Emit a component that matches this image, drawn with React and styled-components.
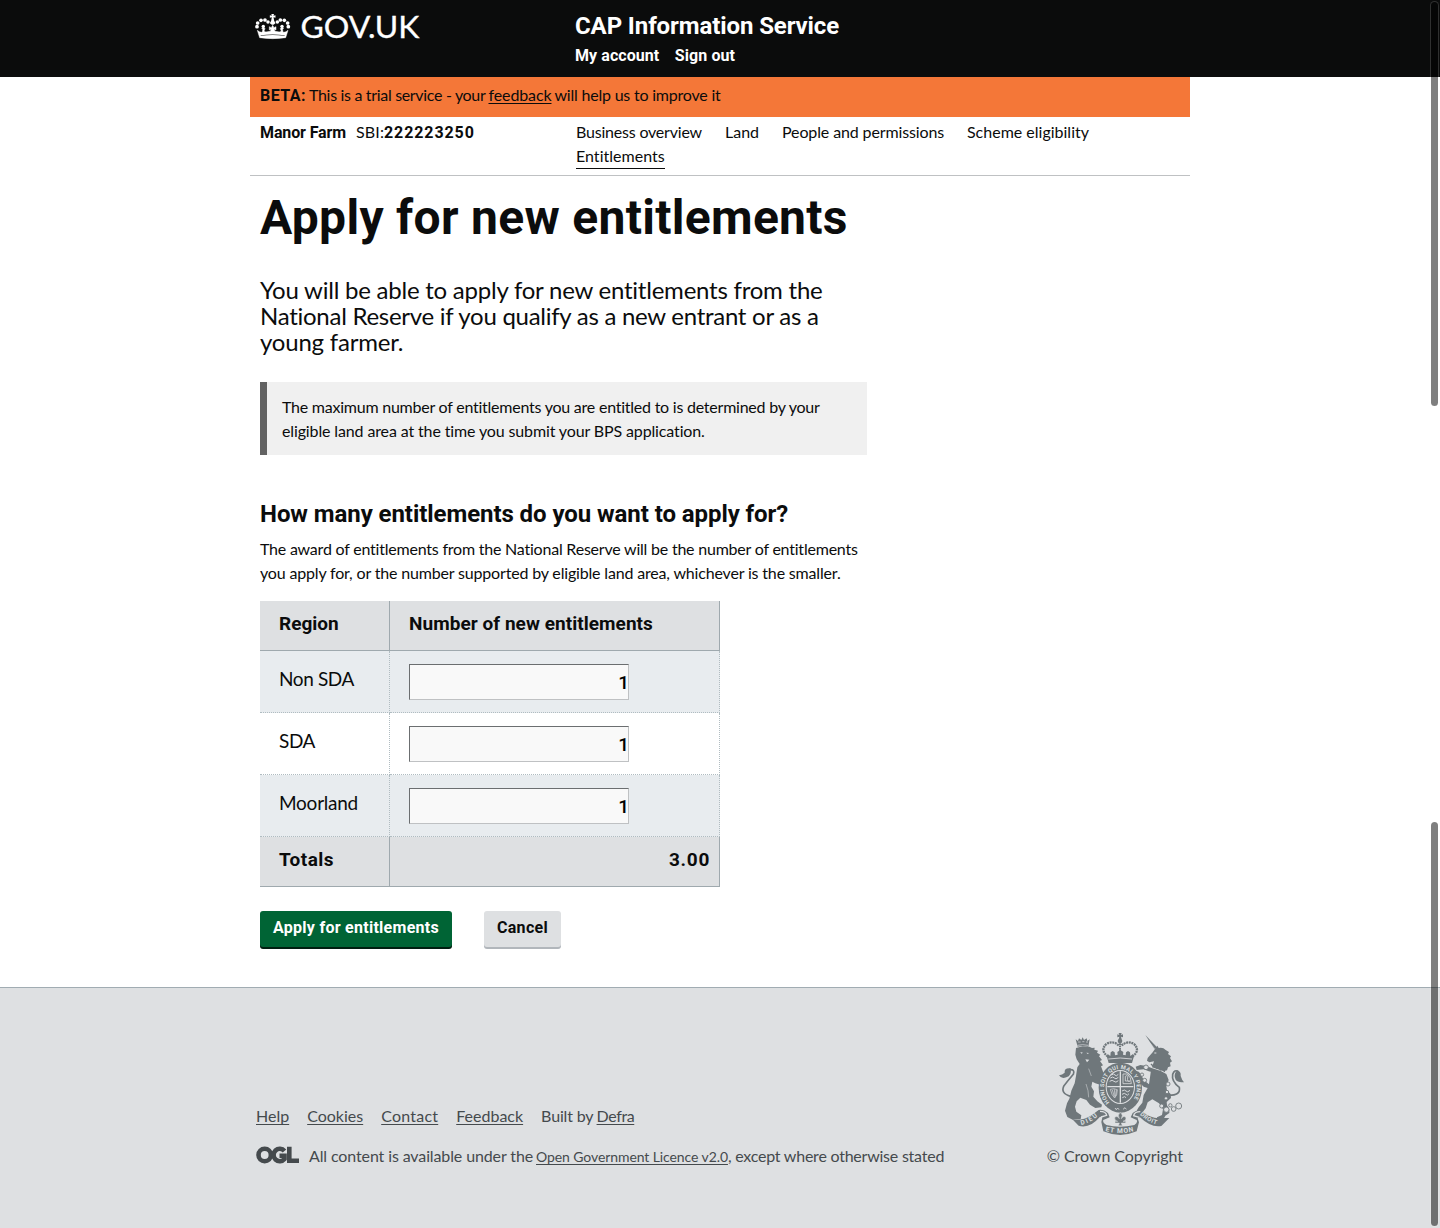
import React from 'react';
import styled, { createGlobalStyle, css } from 'styled-components';

const LIGHT = '"Lato", "Liberation Sans", sans-serif';
const BOLD = '"Roboto", "Liberation Sans", sans-serif';

const GlobalStyle = createGlobalStyle`
  * { box-sizing: border-box; }
  html, body { margin: 0; padding: 0; background: #fff; overflow: hidden; }
  body { font-family: ${LIGHT}; font-size: 16px; line-height: 24px; color: #0b0c0c; }
  h1, h2, p { margin: 0; }
`;

const Text = styled.span`
  letter-spacing: ${p => p.$ls || 0}px;
  margin-left: ${p => p.$before || 0}px;
  white-space: nowrap;
  ${p => p.$bold && css`font-family: ${BOLD}; font-weight: 700;`}
`;
const Line = styled(Text)`display: block;`;

const Page = styled.div`
  position: relative;
  display: flex;
  flex-direction: column;
  height: 1228px;
`;
const Container = styled.div`
  width: 940px;
  margin: 0 auto;
`;

/* ---- header ---- */
const Header = styled.header`
  height: 77px;
  background: #0b0c0c;
`;
const HeaderInner = styled(Container)`display: flex;`;
const LogoLink = styled.a`
  flex: 0 0 325px;
  padding: 4px 0 0 5px;
`;
const Service = styled.div`
  padding-top: 11px;
  color: #fff;
`;
const ServiceName = styled.div`
  font: 700 24px/30px ${BOLD};
  letter-spacing: -0.1px;
`;
const AccountLinks = styled.nav`
  display: flex;
  gap: 15.5px;
  margin-top: 5px;
  font: 700 16px/20px ${BOLD};
  letter-spacing: 0.07px;
`;

/* ---- banner and business bar ---- */
const BetaBanner = styled(Container)`
  height: 40px;
  padding: 6px 10px 0;
  background: #f47738;
  display: flex;
  align-items: baseline;
`;
const Link = styled.a`
  color: inherit;
  text-decoration: underline;
  text-decoration-thickness: 1px;
  text-underline-offset: 2px;
  text-decoration-skip-ink: none;
  white-space: nowrap;
  letter-spacing: ${p => p.$ls || 0}px;
  font-size: ${p => p.$size || 16}px;
  margin-left: ${p => p.$before || 0}px;
  margin-right: ${p => p.$after || 0}px;
`;
const BusinessBar = styled(Container)`
  display: flex;
  height: 59px;
  padding: 3px 10px 6px;
  border-bottom: 1px solid #bfc1c3;
`;
const Business = styled.div`
  flex: 0 0 316px;
  display: flex;
  align-items: baseline;
`;
const Sbi = styled.span`
  margin-left: 10px;
`;
const Tabs = styled.nav`
  flex: 1;
  display: flex;
  flex-wrap: wrap;
  align-content: flex-start;
  column-gap: 23px;
`;
const Tab = styled.a`
  letter-spacing: ${p => p.$ls || 0}px;
  height: ${p => (p.$current ? 25 : 24)}px;
  border-bottom: ${p => (p.$current ? '1px solid #0b0c0c' : '0')};
`;

/* ---- content ---- */
const Main = styled.main`
  width: 940px;
  height: 811px;
  margin: 0 auto;
  padding: 17px 10px 0;
`;
const Title = styled.h1`
  font: 700 48px/50px ${BOLD};
  letter-spacing: 0.3px;
`;
const Lede = styled.p`
  margin-top: 34px;
  font-size: 24px;
  line-height: 26px;
`;
const Callout = styled.div`
  width: 607px;
  margin-top: 27px;
  padding: 13px 15px 12px;
  border-left: 7px solid #626262;
  background: #f0f0f0;
`;
const Subtitle = styled.h2`
  margin-top: 44px;
  font: 700 24px/30px ${BOLD};
  letter-spacing: -0.07px;
`;
const Body = styled.p`
  margin-top: 8px;
`;

const Table = styled.table`
  width: 460px;
  margin-top: 16px;
  border-collapse: separate;
  border-spacing: 0;
  table-layout: fixed;
  font-size: 19px;
  line-height: 25px;
`;
const HeadCell = styled.th`
  width: ${p => p.$width || 'auto'};
  height: 50px;
  padding: 10px 9px 0 19px;
  vertical-align: top;
  text-align: ${p => p.$align || 'left'};
  font-family: ${BOLD};
  font-weight: 700;
  letter-spacing: ${p => p.$ls || 0}px;
  background: #dee0e2;
  border-right: 1px solid #9fa9ae;
  border-bottom: 1px solid #9fa9ae;
`;
const Cell = styled.td`
  height: 62px;
  padding: ${p => p.$top}px 0 0 19px;
  vertical-align: top;
  letter-spacing: ${p => p.$ls || 0}px;
  border-right: 1px dotted #b0bcc1;
  border-bottom: 1px dotted #b0bcc1;
`;
const Row = styled.tr`
  background: ${p => (p.$shaded ? '#e8ecef' : '#fff')};
`;
const NumberInput = styled.input`
  display: block;
  width: 220px;
  height: 36px;
  margin: 0;
  padding: 0;
  text-align: right;
  font: 500 19px/25px ${BOLD};
  letter-spacing: -1px;
  color: #000;
  background: #f9f9f9;
  border: 1px solid;
  border-color: #6b6e70 #bfc1c3 #bfc1c3 #6b6e70;
  border-radius: 0;
  outline: 0;
`;

const Actions = styled.div`
  display: flex;
  gap: 32px;
  margin-top: 24px;
`;
const Button = styled.button`
  width: ${p => p.$width}px;
  height: 36px;
  margin: 0 0 2px;
  padding: 0 0 3px;
  border: 0;
  border-radius: 3px;
  font: 700 16px/24px ${BOLD};
  letter-spacing: ${p => p.$ls}px;
  color: ${p => (p.$primary ? '#fff' : '#0b0c0c')};
  background: ${p => (p.$primary ? '#006435' : '#dee0e2')};
  box-shadow: 0 2px 0 ${p => (p.$primary ? '#001e10' : '#b1b6bb')};
`;

/* ---- footer ---- */
const Footer = styled.footer`
  flex: 1;
  background: #dee0e2;
  border-top: 1px solid #a1acb2;
  color: #454a4d;
`;
const FooterInner = styled.div`
  display: flex;
  justify-content: space-between;
  width: 928px;
  margin: 0 auto;
  padding-top: 45px;
`;
const FooterText = styled.div`
  padding-top: 71px;
`;
const FooterLinks = styled.nav`
  display: flex;
  gap: 18px;
`;
const Licence = styled.div`
  display: flex;
  align-items: baseline;
  margin-top: 16px;
`;
const Ogl = styled.svg`
  flex: none;
  align-self: flex-start;
  width: 43px;
  height: 18px;
  margin: 2px 10px 0 0;
`;
const Copyright = styled.div`
  display: flex;
  flex-direction: column;
  align-items: flex-end;
`;
const CopyrightText = styled.span`
  margin: 9px 1px 0 0;
`;

const ScrollThumb = styled.div`
  position: absolute;
  right: 1px;
  top: ${p => p.$top}px;
  width: 9px;
  height: 406px;
  border: 1px solid rgba(255, 255, 255, 0.15);
  border-radius: 5px;
  background: rgba(0, 0, 0, 0.5);
  background-clip: padding-box;
`;

const GovLogo = () => (
  <svg width="180" height="50" viewBox="255 4 180 50" fill="#fff">
    <g transform="translate(240 0) scale(0.33333)">
      <path stroke="#fff" strokeWidth="1.500" d="M59 113 L52 91 Q58 97 65 97 Q69 95 68 88 L65 84 L71 81 L75 86 L72 93 Q76 97 82 95 L91 94 L94 87 L88 90 L88 80 L94 83 L98 76 L102 83 L108 80 L108 90 L102 87 L105 94 L114 95 Q120 97 124 93 L121 86 L125 81 L131 84 L128 88 Q127 95 131 97 Q138 97 144 91 L137 113 Q98 119 59 113Z" />
      <path d="M62 106 Q98 101 134 106 L134 107 Q98 102.500 62 107Z" fill="#0b0c0c" />
      <path d="M94 42h8l-1.500 5 6-1.500v8l-6-1.500 2 10 4 8-6 4h-5l-6-4 4-8 2-10-6 1.500v-8l6 1.500z" />
      <circle cx="51" cy="80" r="5.600" /><circle cx="53" cy="69" r="5.500" />
      <circle cx="63" cy="61" r="5.500" /><circle cx="75" cy="60" r="5.500" />
      <circle cx="84" cy="66" r="5.300" /><circle cx="112" cy="66" r="5.300" />
      <circle cx="121" cy="60" r="5.500" /><circle cx="133" cy="61" r="5.500" />
      <circle cx="143" cy="69" r="5.500" /><circle cx="145" cy="80" r="5.600" />
      <circle cx="70" cy="79" r="5" /><circle cx="126" cy="79" r="5" />
    </g>
    <text x="300.500" y="37.700" fontFamily={LIGHT} fontSize="30.500" stroke="#fff" strokeWidth="0.300" textLength="119" lengthAdjust="spacingAndGlyphs">GOV.UK</text>
  </svg>
);

const Arms = () => (
  <svg width="125" height="102" viewBox="57 39 375 306" fill="#6f777b">
    <defs>
      <path id="garter" d="M209 247 A49 57 0 1 1 273 247" />
      <path id="dieu" d="M124 315 Q155 308 177 285" />
      <path id="etmon" d="M196 333 Q240 345 285 333" />
      <path id="droit" d="M299 284 Q325 308 354 314" />
    </defs>
    {/* lion */}
    <path d="M107 58 l7 5 3-8 7 5 4-8 4 8 8-5 2 8 7-5-4 22q-16-4-32 0z" />
    <path d="M112 76q16-4 32 0M114 66h8m5-1h6m5 1h6" stroke="#dee0e2" strokeWidth="2" fill="none" />
    <path d="M108 84 L128 79 L148 80 L156 84 L164 83 L163 89 L174 92 L171 98 L181 104 L177 109 L186 120 L180 123 L189 136 L183 139 L188 152 L192 166 L208 178 L207 188 L196 196 L180 194 L166 190 L157 185 L154 200 L162 214 L160 230 L172 244 L186 254 L184 262 L166 264 L150 254 L139 240 L121 233 L110 244 L105 260 L109 275 L124 286 L122 297 L98 299 L82 291 L75 272 L81 250 L88 236 L94 212 L104 190 L108 168 L112 142 L119 132 L110 118 L106 104Z" />
    <path d="M121 96l8 2-5 3zM136 118l12 1-7 8zM139 98l8 1-4 3z" fill="#dee0e2" />
    <path d="M146 146l8 22M138 192q8 20 8 40" stroke="#dee0e2" strokeWidth="1.500" fill="none" />
    <path d="M92 229 Q60 220 72 197 Q84 182 100 163 Q106 147 88 149" fill="none" stroke="#6f777b" strokeWidth="5" />
    <path d="M92 145 q-20-2-18 13 q-7 7-17 8 q7 12 22 6 q17-4 13-27z" />
    {/* unicorn */}
    <path d="M316 45 L351 82 L344 88Z" />
    <path d="M328 67l18 21" stroke="#dee0e2" strokeWidth="1.500" />
    <path d="M347 84 l5-7 4 7 q13-3 21 6 l10 6-3 6 9 7-3 5 6 10-6 4 2 11-8 3-3 9-10 3-35-12 6-18-14 3-7-5 2-8 15-17z" />
    <path d="M343 99h6" stroke="#dee0e2" strokeWidth="3" />
    <path d="M333 132 l7 7 5-5 5 10 7-4 4 10 8-3 5 9" fill="none" stroke="#6f777b" strokeWidth="4" />
    <path d="M334 144 q25 6 45 18 l7 18-7 18 2 13 11 11 1 12-13 12 1 10 7 12 0 11-12 8-8 15-18-3 1-7 15-7 3-17-12-18-20-12-14 9-6 18-8 10-15 6-6-6 8-13 11-14 4-23 12-21-12-4-13-13-6-16-9-8-9 0-3-6 10-7 15 5 7 8 8 17 16 13z" />
    <path d="M290 150 l-3-10 14-5 18 3 16 6 10 14-19-4-15-6z" />
    <path d="M384 226 Q423 227 418 202 Q394 184 398 163 Q404 148 414 154" fill="none" stroke="#6f777b" strokeWidth="5" />
    <path d="M411 151 q13 3 11 17 q5 15 10 19 q-19 0-25-8 q-8-13 4-28z" />
    <g fill="#dee0e2" stroke="#6f777b" strokeWidth="2.600">
      <circle cx="318" cy="142" r="7" /><circle cx="306" cy="164" r="5" /><circle cx="314" cy="181" r="6" />
      <circle cx="384" cy="192" r="6" /><circle cx="381" cy="216" r="5" /><circle cx="378" cy="235" r="5" />
      <circle cx="365" cy="258" r="6" /><circle cx="379" cy="269" r="8" /><circle cx="391" cy="256" r="5" />
      <circle cx="401" cy="267" r="7" /><circle cx="416" cy="258" r="9" />
    </g>
    {/* royal crown */}
    <path d="M236 39h9l-2 6 6-2v9l-6-2 2 8h-9l2-8-6 2v-9l6 2z" />
    <circle cx="240" cy="63" r="7" />
    <path d="M204 110 Q179 91 199 72 Q220 60 238 78 M277 110 Q302 91 282 72 Q262 60 243 78" fill="none" stroke="#6f777b" strokeWidth="7" strokeDasharray="6 2" />
    <path d="M240 70v34" stroke="#6f777b" strokeWidth="6" strokeDasharray="5 2" />
    <path d="M201 112 l2-10 8 6 1-11 6-4 6 4 1 9 8-2-1-8 9-6 9 6-1 8 8 2 1-9 6-4 6 4 1 11 8-6 2 10-5 17 H206z" />
    <path d="M205 117q36-6 71 0" stroke="#dee0e2" strokeWidth="2.500" fill="none" />
    {/* shield and garter */}
    <ellipse cx="241" cy="203" rx="65" ry="75" />
    <ellipse cx="241" cy="201" rx="44" ry="51" fill="#dee0e2" />
    <ellipse cx="241" cy="201" rx="41" ry="48" />
    <path d="M241 154v94M202 200h78" stroke="#dee0e2" strokeWidth="4" />
    <path d="M211 174q8-6 12 0t12-2M209 184q8-6 13 0t13-2M214 165q8-6 11 0t10-2M246 213q8-6 12 0t12-2M246 223q8-6 12 0t9-2M247 233q8-6 11 0" stroke="#dee0e2" strokeWidth="2.800" fill="none" />
    <path d="M249 162v29h25q0-20-12-29zM256 169q9-6 7 5t5 10-12-1z" fill="none" stroke="#dee0e2" strokeWidth="2.400" />
    <path d="M211 208q10-4 21 1 0 18-8 25-9-8-13-26zM217 210l6 20M223 208l2 22M229 210l-2 18" fill="none" stroke="#dee0e2" strokeWidth="2" />
    <text fontFamily={BOLD} fontWeight="700" fontSize="17" fill="#dee0e2">
      <textPath href="#garter" textLength="248">HONI SOIT QUI MAL Y PENSE</textPath>
    </text>
    <path d="M225 264l4 5 4-5 4 5M249 268l6-5 4 5" stroke="#dee0e2" strokeWidth="2.500" fill="none" />
    {/* scroll */}
    <path d="M97 298 Q125 304 155 286 L176 270 Q190 267 204 279 L209 292 L190 300 Q187 309 199 315 Q239 326 283 315 Q294 308 290 300 L272 292 L278 279 Q292 267 309 276 Q333 297 364 294 L388 294 L364 318 Q333 324 300 292 L293 295 L297 307 L290 334 Q241 356 190 334 L184 306 L187 292 L180 290 Q149 327 116 317Z" />
    <path d="M180 274q18 0 20 12l-17 5M301 275q-18 0-20 12l17 5" stroke="#dee0e2" strokeWidth="4" fill="none" />
    <path d="M241 277q10 8 3 19 7-11 14-3 1 9-9 11l8 0v5h-13l3 8h-12l3-8h-13v-5l8 0q-10-2-9-11 7-8 14 3-7-11 3-19z" stroke="#dee0e2" strokeWidth="1.500" />
    <g fontFamily={BOLD} fontWeight="700" fill="#dee0e2">
      <text fontSize="19"><textPath href="#dieu" textLength="56">DIEU</textPath></text>
      <text fontSize="20"><textPath href="#etmon" textLength="86">ET MON</textPath></text>
      <text fontSize="18"><textPath href="#droit" textLength="58">DROIT</textPath></text>
    </g>
  </svg>
);

const regions = [
  { name: 'Non SDA', ls: -0.39 },
  { name: 'SDA', ls: -0.42 },
  { name: 'Moorland', ls: -0.25 },
];

export default function App() {
  return (
    <Page>
      <GlobalStyle />
      <Header>
        <HeaderInner>
          <LogoLink><GovLogo /></LogoLink>
          <Service>
            <ServiceName>CAP Information Service</ServiceName>
            <AccountLinks><span>My account</span><span>Sign out</span></AccountLinks>
          </Service>
        </HeaderInner>
      </Header>

      <BetaBanner>
        <Text $bold $ls={0.46}>BETA:</Text>
        <Text $before={3} $ls={-0.32}>This is a trial service - your</Text>
        <Link $before={3} $after={3} $ls={-0.11}>feedback</Link>
        <Text $ls={-0.21}>will help us to improve it</Text>
      </BetaBanner>

      <BusinessBar>
        <Business>
          <Text $bold $ls={-0.12}>Manor Farm</Text>
          <Sbi><Text $ls={0.12}>SBI:</Text><Text $bold $ls={0.9}>222223250</Text></Sbi>
        </Business>
        <Tabs>
          <Tab $ls={-0.2}>Business overview</Tab>
          <Tab>Land</Tab>
          <Tab $ls={-0.13}>People and permissions</Tab>
          <Tab>Scheme eligibility</Tab>
          <Tab $current $ls={0.02}>Entitlements</Tab>
        </Tabs>
      </BusinessBar>

      <Main>
        <Title>Apply for new entitlements</Title>
        <Lede>
          <Line $ls={-0.23}>You will be able to apply for new entitlements from the</Line>
          <Line $ls={-0.27}>National Reserve if you qualify as a new entrant or as a</Line>
          <Line $ls={-0.2}>young farmer.</Line>
        </Lede>
        <Callout>
          <Line $ls={-0.235}>The maximum number of entitlements you are entitled to is determined by your</Line>
          <Line $ls={-0.13}>eligible land area at the time you submit your BPS application.</Line>
        </Callout>
        <Subtitle>How many entitlements do you want to apply for?</Subtitle>
        <Body>
          <Line $ls={-0.215}>The award of entitlements from the National Reserve will be the number of entitlements</Line>
          <Line $ls={-0.17}>you apply for, or the number supported by eligible land area, whichever is the smaller.</Line>
        </Body>
        <Table>
          <thead>
            <tr>
              <HeadCell $width="130px">Region</HeadCell>
              <HeadCell $ls={0.05}>Number of new entitlements</HeadCell>
            </tr>
          </thead>
          <tbody>
            {regions.map((r, i) => (
              <Row key={r.name} $shaded={i % 2 === 0}>
                <Cell $top={15} $ls={r.ls}>{r.name}</Cell>
                <Cell $top={13}><NumberInput defaultValue="1" /></Cell>
              </Row>
            ))}
          </tbody>
          <tfoot>
            <tr>
              <HeadCell $ls={0.45}>Totals</HeadCell>
              <HeadCell $align="right" $ls={0.7}>3.00</HeadCell>
            </tr>
          </tfoot>
        </Table>
        <Actions>
          <Button $primary $width={192} $ls={0.27}>Apply for entitlements</Button>
          <Button $width={77} $ls={0.3}>Cancel</Button>
        </Actions>
      </Main>

      <Footer>
        <FooterInner>
          <FooterText>
            <FooterLinks>
              <Link>Help</Link>
              <Link>Cookies</Link>
              <Link $ls={0.22}>Contact</Link>
              <Link>Feedback</Link>
              <span><Text $ls={-0.15}>Built by</Text> <Link $before={-1} $ls={-0.4}>Defra</Link></span>
            </FooterLinks>
            <Licence>
              <Ogl viewBox="0 0 43 18">
                <g fill="none" stroke="#454a4d" strokeWidth="4.600">
                  <circle cx="8.700" cy="9" r="6.200" />
                  <path d="M28.500 5 A6.200 6.200 0 1 0 28.500 13 V9.800 H23.500" />
                  <path d="M33.300 0.800 V14.700 H43" />
                </g>
              </Ogl>
              <Text $ls={-0.12}>All content is available under the</Text>
              <Link $size={14} $before={3} $ls={-0.09}>Open Government Licence v2.0</Link>
              <Text $ls={-0.23}>, except where otherwise stated</Text>
            </Licence>
          </FooterText>
          <Copyright>
            <Arms />
            <CopyrightText><Text $ls={-0.05}>© Crown Copyright</Text></CopyrightText>
          </Copyright>
        </FooterInner>
      </Footer>

      <ScrollThumb $top={1} />
      <ScrollThumb $top={821} />
    </Page>
  );
}
